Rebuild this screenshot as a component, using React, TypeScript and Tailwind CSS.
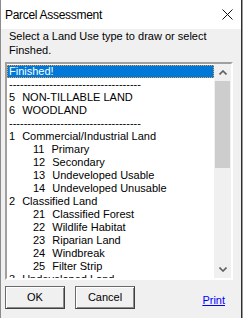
import React from 'react';

type Row = { kind: 'item' | 'dash'; num?: string; label?: string; sub?: boolean; selected?: boolean };

const rows: Row[] = [
    { kind: 'item', label: 'Finished!', selected: true },
    { kind: 'dash' },
    { kind: 'item', num: '5', label: 'NON-TILLABLE LAND' },
    { kind: 'item', num: '6', label: 'WOODLAND' },
    { kind: 'dash' },
    { kind: 'item', num: '1', label: 'Commercial/Industrial Land' },
    { kind: 'item', num: '11', label: 'Primary', sub: true },
    { kind: 'item', num: '12', label: 'Secondary', sub: true },
    { kind: 'item', num: '13', label: 'Undeveloped Usable', sub: true },
    { kind: 'item', num: '14', label: 'Undeveloped Unusable', sub: true },
    { kind: 'item', num: '2', label: 'Classified Land' },
    { kind: 'item', num: '21', label: 'Classified Forest', sub: true },
    { kind: 'item', num: '22', label: 'Wildlife Habitat', sub: true },
    { kind: 'item', num: '23', label: 'Riparian Land', sub: true },
    { kind: 'item', num: '24', label: 'Windbreak', sub: true },
    { kind: 'item', num: '25', label: 'Filter Strip', sub: true },
    { kind: 'item', num: '3', label: 'Undeveloped Land' },
];

const DASHES = '------------------------------------';

const ListRow: React.FC<{ row: Row }> = ({ row }) => {
    if (row.kind === 'dash') {
        return <div className="h-[13px] leading-[13px] pl-[2px] whitespace-pre">{DASHES}</div>;
    }
    if (row.selected) {
        return (
            <div className="h-[13px] leading-[11px] pl-[1px] bg-[#0078d7] text-white border border-dotted border-[#ff9c3a]">
                {row.label}
            </div>
        );
    }
    return (
        <div className={`h-[13px] leading-[13px] flex gap-[7px] whitespace-pre ${row.sub ? 'pl-[26px]' : 'pl-[2px]'}`}>
            <span>{row.num}</span>
            <span>{row.label}</span>
        </div>
    );
};

// chevron used by the scroll arrows
const Chevron: React.FC<{ up?: boolean }> = ({ up }) => (
    <svg width="8" height="5" viewBox="0 0 8 5" className="block">
        <path d={up ? 'M0.5 4.5 L4 1 L7.5 4.5' : 'M0.5 0.5 L4 4 L7.5 0.5'} fill="none" stroke="#606060" strokeWidth="1.6" />
    </svg>
);

const ClassicButton: React.FC<{ label: string }> = ({ label }) => (
    <button
        type="button"
        className="w-[60px] h-[23px] bg-[#f0f0f0] border border-[#6a6a6a] border-b-[#404040] border-r-[#404040] shadow-[inset_1px_1px_0_#ffffff,inset_-1px_-1px_0_#8a8a8a] text-[11px] text-black leading-[21px]"
    >
        {label}
    </button>
);

export default function App() {
    return (
        <div className="w-[243px] h-[318px] flex bg-[#9a9a9a] overflow-hidden" style={{ fontFamily: '"Liberation Sans", Arial, sans-serif' }}>
            <div className="w-[242px] h-full flex flex-col border-l border-[#8c8c8c] border-r border-r-[#2e2e2e]">
                {/* title bar */}
                <div className="h-[29px] bg-white flex items-center justify-between pl-[4px] pr-[8px]">
                    <span className="text-[12px] text-black tracking-[-0.3px]">Parcel Assessment</span>
                    <svg width="11" height="11" viewBox="0 0 11 11">
                        <path d="M0.5 0.5 L10.5 10.5 M10.5 0.5 L0.5 10.5" stroke="#111" strokeWidth="1" />
                    </svg>
                </div>

                <div className="flex-1 bg-[#f0f0f0] pl-[4px] text-[11px] text-black">
                    <p className="leading-[14px] pl-[4px]">
                        Select a Land Use type to draw or select
                        <br />
                        Finshed.
                    </p>

                    {/* list box */}
                    <div className="mt-[5px] w-[228px] h-[218px] flex border-2 border-t-[#a0a0a0] border-l-[#a0a0a0] border-b-[#ffffff] border-r-[#ffffff]">
                        <div className="flex-1 flex bg-white overflow-hidden">
                            <div className="flex-1 pt-[1px] overflow-hidden">
                                {rows.map((r, i) => (
                                    <ListRow key={i} row={r} />
                                ))}
                            </div>
                            <div className="w-[17px] flex flex-col bg-[#f0f0f0]">
                                <div className="h-[17px] flex items-center justify-center">
                                    <Chevron up />
                                </div>
                                <div className="h-[87px] mx-[1px] bg-[#cdcdcd]" />
                                <div className="flex-1" />
                                <div className="h-[17px] flex items-center justify-center">
                                    <Chevron />
                                </div>
                            </div>
                        </div>
                    </div>

                    {/* buttons */}
                    <div className="mt-[6px] flex items-center">
                        <ClassicButton label="OK" />
                        <div className="ml-[10px] flex">
                            <ClassicButton label="Cancel" />
                        </div>
                        <a href="#" className="ml-auto mr-[16px] mt-[5px] text-[#0000ff] underline leading-[13px]">
                            Print
                        </a>
                    </div>
                </div>
            </div>
        </div>
    );
}
